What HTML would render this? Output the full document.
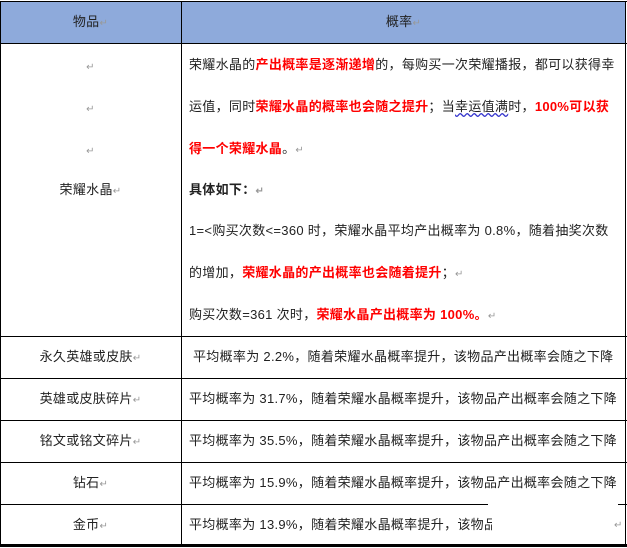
<!DOCTYPE html>
<html><head><meta charset="utf-8"><style>
*{margin:0;padding:0;box-sizing:border-box}
body{width:627px;height:548px;background:#fff;position:relative;overflow:hidden;font-family:"Liberation Sans","Noto Sans CJK SC",sans-serif;font-size:13px;color:#222;letter-spacing:0.3px}
.h{position:absolute;left:0;top:1px;width:626px;height:42px;background:#8eaadb}
.l{position:absolute;background:#000}
.t{position:absolute;white-space:nowrap;line-height:16px}
.r{color:#f00;font-weight:bold}
.m{color:#999;font-size:10px}
.c{text-align:center;width:181px;left:0}
</style></head><body>
<div class="h"></div>
<div class="l" style="left:0;top:1px;width:627px;height:1px"></div>
<div class="l" style="left:0;top:43px;width:627px;height:1px"></div>
<div class="l" style="left:0;top:336px;width:627px;height:1px"></div>
<div class="l" style="left:0;top:378px;width:627px;height:1px"></div>
<div class="l" style="left:0;top:420px;width:627px;height:1px"></div>
<div class="l" style="left:0;top:462px;width:627px;height:1px"></div>
<div class="l" style="left:0;top:504px;width:627px;height:1px"></div>
<div class="l" style="left:0;top:544px;width:627px;height:3px"></div>
<div class="l" style="left:0;top:1px;width:1px;height:545px"></div>
<div class="l" style="left:181px;top:1px;width:1px;height:545px"></div>
<div class="l" style="left:625px;top:1px;width:1px;height:545px"></div>

<div class="t c" style="top:14px">物品<span class="m">↵</span></div>
<div class="t" style="left:182px;width:443px;text-align:center;top:14px">概率<span class="m">↵</span></div>

<div class="t c" style="top:58px"><span class="m">↵</span></div>
<div class="t c" style="top:100px"><span class="m">↵</span></div>
<div class="t c" style="top:142px"><span class="m">↵</span></div>
<div class="t c" style="top:182px">荣耀水晶<span class="m">↵</span></div>

<div class="t" style="left:189px;top:57px">荣耀水晶的<span class="r">产出概率是逐渐递增</span>的，每购买一次荣耀播报，都可以获得幸</div>
<div class="t" style="left:189px;top:99px">运值，同时<span class="r">荣耀水晶的概率也会随之提升</span>；当<span style="text-decoration:underline wavy #33c">幸运值满</span>时，<span class="r">100%可以获</span></div>
<div class="t" style="left:189px;top:141px"><span class="r">得一个荣耀水晶</span>。<span class="m">↵</span></div>
<div class="t" style="left:189px;top:182px;font-weight:bold">具体如下：<span class="m">↵</span></div>
<div class="t" style="left:189px;top:223px">1=&lt;购买次数&lt;=360 时，荣耀水晶平均产出概率为 0.8%，随着抽奖次数</div>
<div class="t" style="left:189px;top:265px">的增加，<span class="r">荣耀水晶的产出概率也会随着提升</span>；<span class="m">↵</span></div>
<div class="t" style="left:189px;top:307px">购买次数=361 次时，<span class="r">荣耀水晶产出概率为 100%。</span><span class="m">↵</span></div>

<div class="t c" style="top:349px">永久英雄或皮肤<span class="m">↵</span></div>
<div class="t" style="left:193px;top:349px">平均概率为 2.2%，随着荣耀水晶概率提升，该物品产出概率会随之下降</div>
<div class="t c" style="top:391px">英雄或皮肤碎片<span class="m">↵</span></div>
<div class="t" style="left:189px;top:391px">平均概率为 31.7%，随着荣耀水晶概率提升，该物品产出概率会随之下降</div>
<div class="t c" style="top:433px">铭文或铭文碎片<span class="m">↵</span></div>
<div class="t" style="left:189px;top:433px">平均概率为 35.5%，随着荣耀水晶概率提升，该物品产出概率会随之下降</div>
<div class="t c" style="top:475px">钻石<span class="m">↵</span></div>
<div class="t" style="left:189px;top:475px">平均概率为 15.9%，随着荣耀水晶概率提升，该物品产出概率会随之下降</div>
<div class="t c" style="top:517px">金币<span class="m">↵</span></div>
<div class="t" style="left:189px;top:517px">平均概率为 13.9%，随着荣耀水晶概率提升，该物品</div>
<div style="position:absolute;left:492px;top:506px;width:128px;height:37px;background:#fff"></div>
<div style="position:absolute;left:488px;top:501px;width:130px;height:5px;background:#fff"></div>
<div class="t m" style="left:614px;top:518px">↵</div>
</body></html>
